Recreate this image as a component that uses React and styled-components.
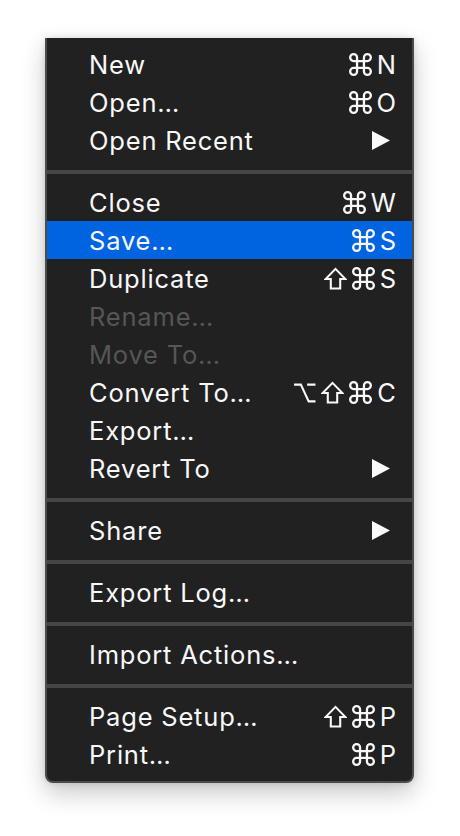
import React from "react";
import styled, { createGlobalStyle } from "styled-components";

const GlobalStyle = createGlobalStyle`
  html, body {
    margin: 0;
    padding: 0;
    background: #ffffff;
  }
`;

const Page = styled.div`
  width: 460px;
  height: 836px;
  padding: 38px 0 0 45px;
  box-sizing: border-box;
  overflow: hidden;
`;

const Panel = styled.div`
  width: 369px;
  box-sizing: border-box;
  background: #212121;
  border: 2px solid #4b4b4b;
  border-top: none;
  border-radius: 0 0 8px 8px;
  padding: 7px 0 8px;
  box-shadow: 0 10px 24px rgba(0, 0, 0, 0.22), 0 0 6px rgba(0, 0, 0, 0.12);
  font-family: "Inter", "Noto Sans", sans-serif;
`;

const Row = styled.div`
  height: 38px;
  display: flex;
  align-items: center;
  justify-content: space-between;
  padding: 0 16px 0 42px;
  font-size: 25.5px;
  letter-spacing: 0.8px;
  color: ${(p) => (p.$disabled ? "#565656" : "#f8f8f8")};
  background: ${(p) => (p.$active ? "#0064e0" : "transparent")};
`;

const Keys = styled.span`
  display: flex;
  align-items: center;
  gap: 5px;
  letter-spacing: 0;
`;

const Sym = styled.svg`
  width: 23px;
  height: 23px;
  fill: none;
  stroke: #f8f8f8;
  stroke-width: 2;
`;

const Arrow = styled.svg`
  width: 18px;
  height: 19px;
  margin-right: 6px;
`;

const Separator = styled.div`
  height: 4px;
  background: #464646;
  margin: 11px 0 9px;
`;

const SubArrow = () => (
  <Arrow viewBox="0 0 18 19">
    <polygon points="0,0 18,9.5 0,19" fill="#f8f8f8" />
  </Arrow>
);

const symbols = {
  cmd: (
    <Sym viewBox="2 2 20 20" key="cmd">
      <path d="M15 6v12a3 3 0 1 0 3-3H6a3 3 0 1 0 3 3V6a3 3 0 1 0-3 3h12a3 3 0 1 0-3-3" />
    </Sym>
  ),
  shift: (
    <Sym viewBox="0 0 22 22" key="shift" strokeLinejoin="miter">
      <path d="M11 1.8 L20.5 11.5 H15.5 V20.5 H6.5 V11.5 H1.5 Z" />
    </Sym>
  ),
  opt: (
    <Sym viewBox="0 0 22 22" key="opt">
      <path d="M1 3.5 H7.5 L15 19.5 H21.5 M13.5 3.5 H21.5" />
    </Sym>
  ),
};

const groups = [
  [
    { label: "New", keys: ["cmd"], key: "N" },
    { label: "Open…", keys: ["cmd"], key: "O" },
    { label: "Open Recent", sub: true },
  ],
  [
    { label: "Close", keys: ["cmd"], key: "W" },
    { label: "Save…", keys: ["cmd"], key: "S", active: true },
    { label: "Duplicate", keys: ["shift", "cmd"], key: "S" },
    { label: "Rename…", disabled: true },
    { label: "Move To…", disabled: true },
    { label: "Convert To…", keys: ["opt", "shift", "cmd"], key: "C" },
    { label: "Export…" },
    { label: "Revert To", sub: true },
  ],
  [{ label: "Share", sub: true }],
  [{ label: "Export Log…" }],
  [{ label: "Import Actions…" }],
  [
    { label: "Page Setup…", keys: ["shift", "cmd"], key: "P" },
    { label: "Print…", keys: ["cmd"], key: "P" },
  ],
];

export default function App() {
  return (
    <>
      <GlobalStyle />
      <Page>
        <Panel>
          {groups.map((items, gi) => (
            <React.Fragment key={gi}>
              {gi > 0 && <Separator />}
              {items.map((it) => (
                <Row key={it.label} $active={it.active} $disabled={it.disabled}>
                  <span>{it.label}</span>
                  {it.sub && <SubArrow />}
                  {it.key && (
                    <Keys>
                      {it.keys.map((k) => symbols[k])}
                      <span>{it.key}</span>
                    </Keys>
                  )}
                </Row>
              ))}
            </React.Fragment>
          ))}
        </Panel>
      </Page>
    </>
  );
}
